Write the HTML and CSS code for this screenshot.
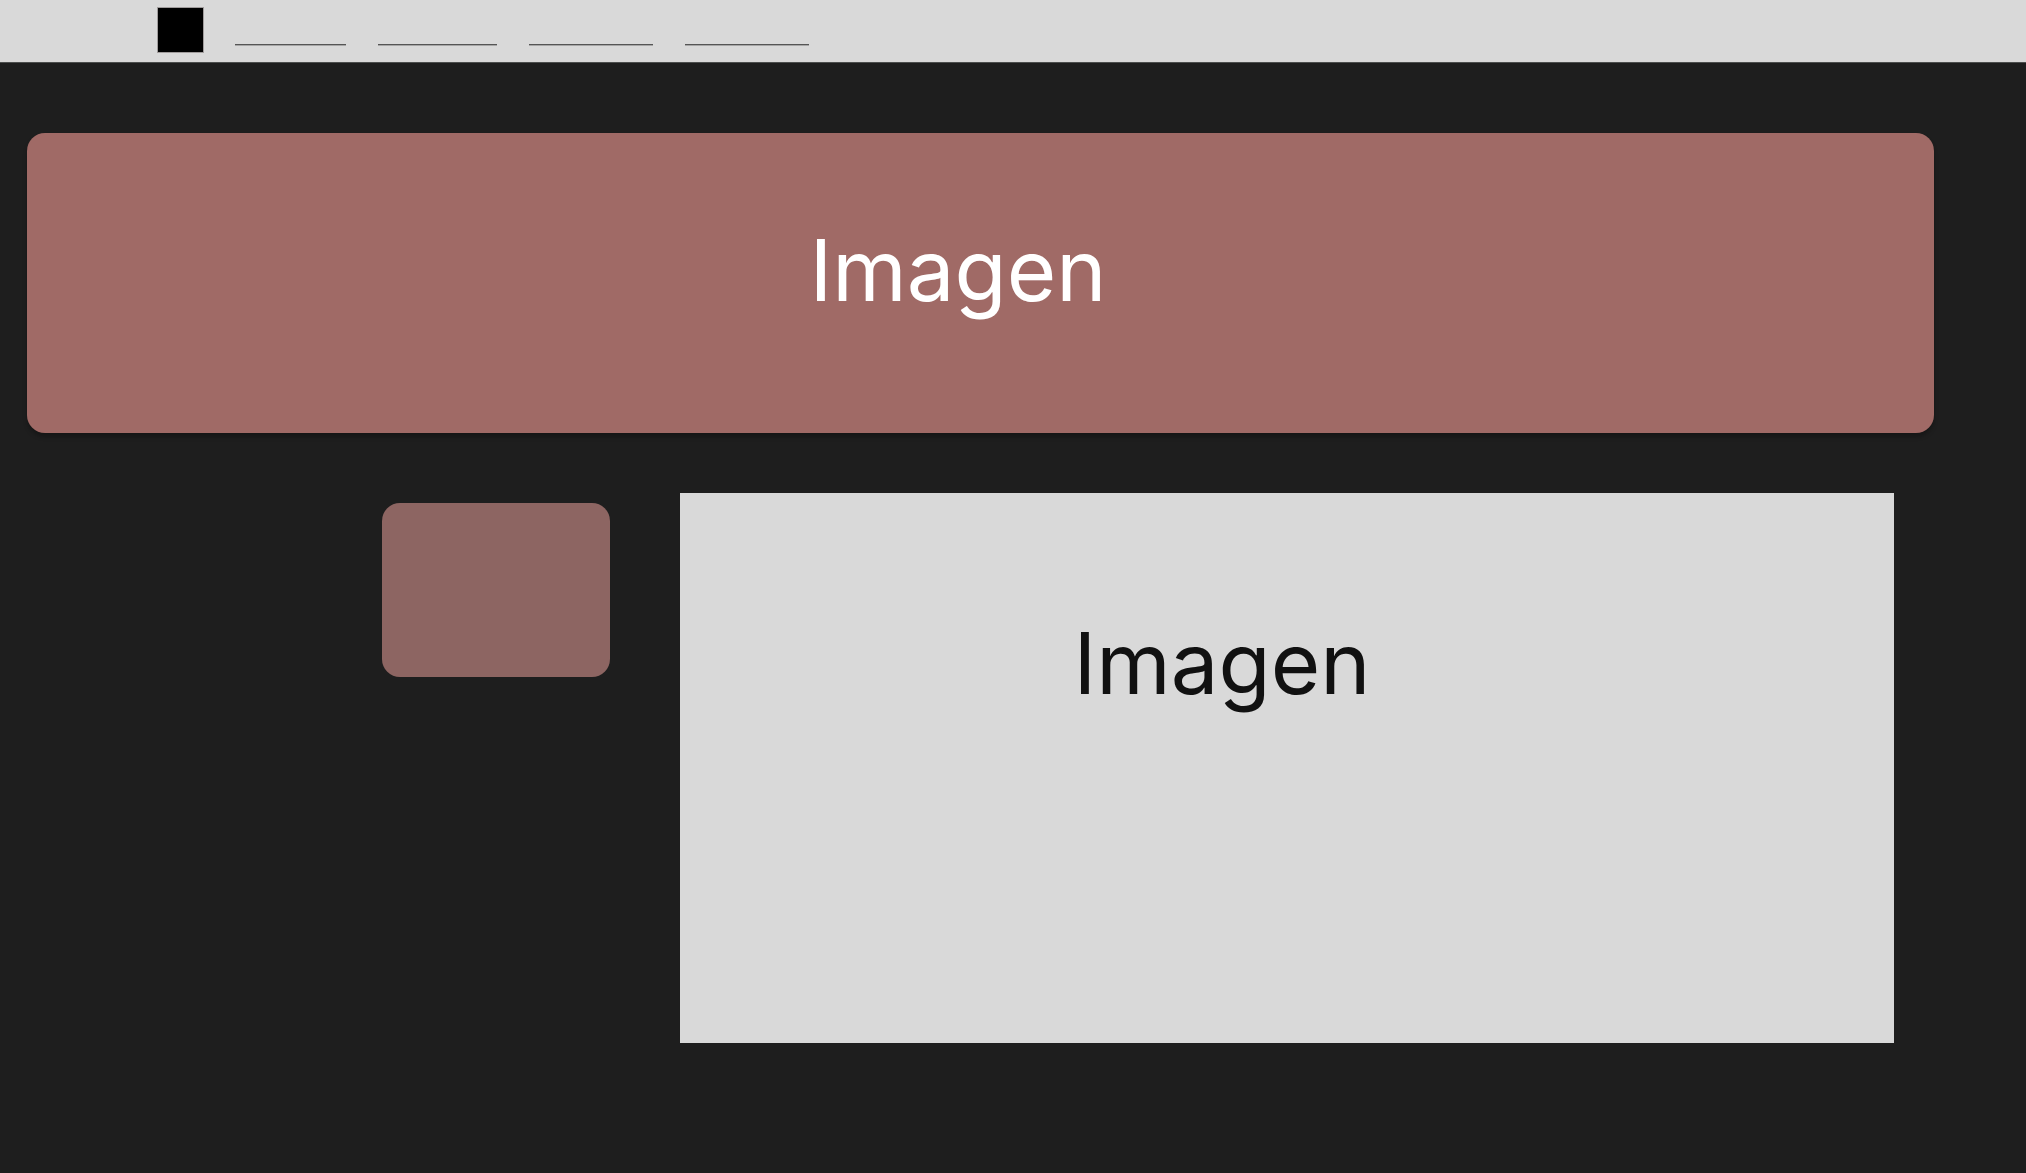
FILE: index.html
```
<!DOCTYPE html>
<html lang="es">
<head>
<meta charset="utf-8">
<meta name="viewport" content="width=device-width, initial-scale=1">
<title>Imagen</title>
<link rel="stylesheet" href="styles.css">
</head>
<body>
<header class="topbar">
  <a class="logo" href="#" aria-label="Inicio"></a>
  <nav class="nav">
    <a class="nav-link nav-link-short" href="#" aria-label="Enlace 1"></a>
    <a class="nav-link nav-link-medium" href="#" aria-label="Enlace 2"></a>
    <a class="nav-link" href="#" aria-label="Enlace 3"></a>
    <a class="nav-link" href="#" aria-label="Enlace 4"></a>
  </nav>
</header>
<main class="page">
  <section class="banner"><h1 class="title">Imagen</h1></section>
  <div class="content">
    <aside class="card"></aside>
    <section class="panel"><h2 class="title">Imagen</h2></section>
  </div>
</main>
</body>
</html>
```
FILE: styles.css
```
* {
  box-sizing: border-box;
}

body {
  margin: 0;
  min-height: 100vh;
  background: #1e1e1e;
  font-family: Inter, "Liberation Sans", sans-serif;
}

.topbar {
  display: flex;
  align-items: flex-start;
  gap: 32px;
  height: 63px;
  padding: 8px 158px;
  background: #d9d9d9;
  border-bottom: 1px solid #4c4e4d;
}

.logo {
  width: 45px;
  height: 44px;
  background: #000;
  box-shadow: 0 0 0 1px #a09c9c;
}

.nav {
  display: flex;
  gap: 32px;
}

.nav-link {
  width: 124px;
  height: 37px;
  border-bottom: 1px solid #555;
  box-shadow: 0 1px #a6a6a6;
}

.nav-link-short {
  width: 111px;
}

.nav-link-medium {
  width: 119px;
}

.page {
  padding: 70px 92px 130px 27px;
}

.banner {
  min-height: 300px;
  padding: 86px 45px 0 0;
  background: #a06a66;
  border-radius: 18px;
  box-shadow: 0 4px 4px rgba(0, 0, 0, 0.25);
}

.title {
  margin: 0;
  font-size: 85px;
  line-height: 104px;
  font-weight: 400;
  text-align: center;
  color: #fff;
}

.content {
  display: grid;
  grid-template-columns: 228px minmax(0, 1fr);
  align-items: start;
  gap: 70px;
  margin-top: 60px;
  padding: 0 40px 0 355px;
}

.card {
  height: 174px;
  margin-top: 10px;
  background: #8d6562;
  border-radius: 18px;
}

.panel {
  min-height: 550px;
  padding: 119px 130px 0 0;
  background: #d9d9d9;
}

.panel .title {
  color: #111;
}
```
